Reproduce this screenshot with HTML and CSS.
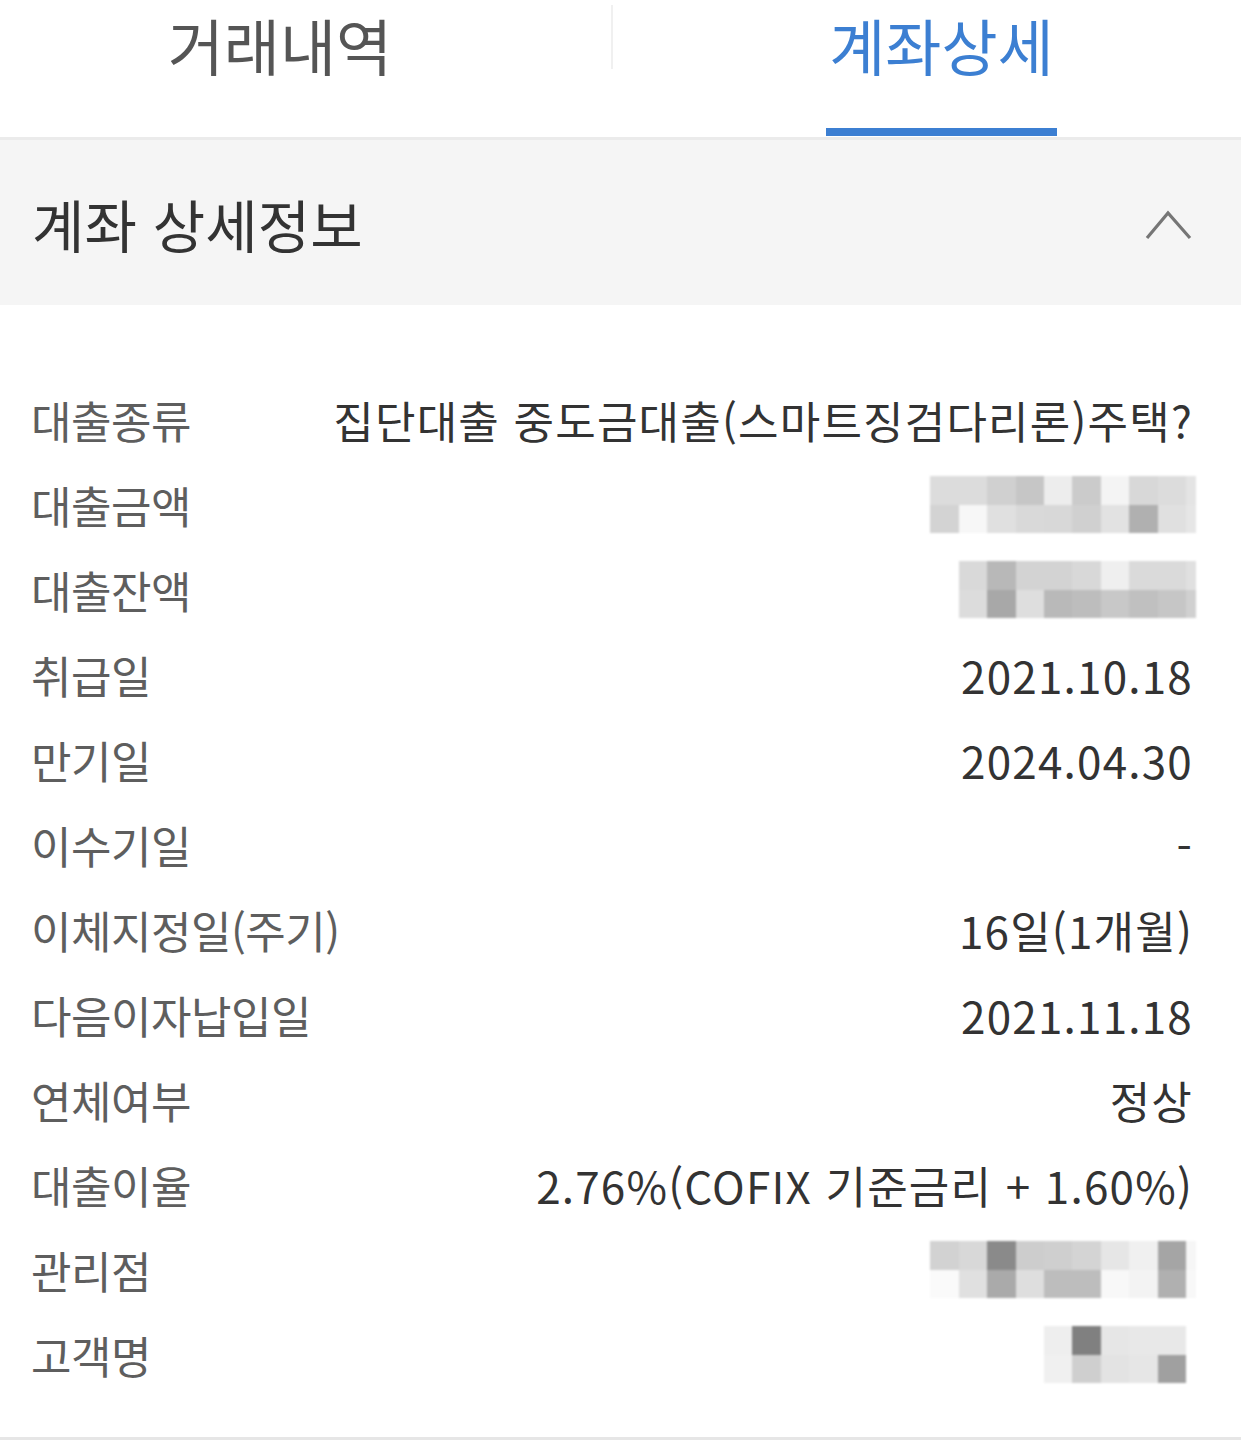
FILE: index.html
```html
<!DOCTYPE html>
<html lang="ko">
<head>
    <meta charset="UTF-8">
    <meta name="viewport" content="width=device-width, initial-scale=1.0">
    <title>계좌상세</title>
    <link rel="stylesheet" href="styles.css">
</head>
<body>

    <!-- Tabs -->
    <div class="tabs">
        <div class="tab"><span>거래내역</span></div>
        <div class="tab-divider"></div>
        <div class="tab active"><span>계좌상세</span></div>
    </div>

    <!-- Section header -->
    <div class="section-header">
        <h2>계좌 상세정보</h2>
        <svg class="chevron" width="48" height="32" viewBox="0 0 48 32">
            <polyline points="2,28 23,3 45,28" fill="none" stroke="#767676" stroke-width="3.2"/>
        </svg>
    </div>

    <!-- Detail rows -->
    <div class="detail-list">
        <div class="row"><span class="label">대출종류</span><span class="value">집단대출 중도금대출(스마트징검다리론)주택?</span></div>
        <div class="row"><span class="label">대출금액</span><span class="value mosaic" id="m-amount"></span></div>
        <div class="row"><span class="label">대출잔액</span><span class="value mosaic" id="m-balance"></span></div>
        <div class="row"><span class="label">취급일</span><span class="value">2021.10.18</span></div>
        <div class="row"><span class="label">만기일</span><span class="value">2024.04.30</span></div>
        <div class="row"><span class="label">이수기일</span><span class="value">-</span></div>
        <div class="row"><span class="label">이체지정일(주기)</span><span class="value">16일(1개월)</span></div>
        <div class="row"><span class="label">다음이자납입일</span><span class="value">2021.11.18</span></div>
        <div class="row"><span class="label">연체여부</span><span class="value">정상</span></div>
        <div class="row"><span class="label">대출이율</span><span class="value">2.76%(COFIX 기준금리 + 1.60%)</span></div>
        <div class="row"><span class="label">관리점</span><span class="value mosaic" id="m-branch"></span></div>
        <div class="row"><span class="label">고객명</span><span class="value mosaic" id="m-name"></span></div>
    </div>

    <script>
        // masked values: two rows of grey cells, the last column is a thin sliver
        const mosaics = {
            'm-amount': [
                ['dcdcdc','dcdcdc','d0d0d0','c6c6c6','ededed','cbcbcb','f4f4f4','d8d8d8','dcdcdc','e4e4e4'],
                ['d3d3d3','f7f7f7','e0e0e0','d9d9d9','d8d8d8','d0d0d0','e2e2e2','b0b0b0','e0e0e0','e6e6e6']
            ],
            'm-balance': [
                ['d9d9d9','b8b8b8','d3d3d3','d3d3d3','d8d8d8','efefef','dadada','dadada','e0e0e0'],
                ['dcdcdc','a8a8a8','dedede','b9b9b9','bdbdbd','c8c8c8','c0c0c0','c6c6c6','d0d0d0']
            ],
            'm-branch': [
                ['d2d2d2','d8d8d8','8a8a8a','cdcdcd','cfcfcf','d4d4d4','e6e6e6','f0f0f0','a5a5a5','f6f6f6'],
                ['fafafa','e0e0e0','aaaaaa','dedede','bdbdbd','bdbdbd','f8f8f8','f3f3f3','b0b0b0','f8f8f8']
            ],
            'm-name': [
                ['eeeeee','808080','e6e6e6','e8e8e8','e8e8e8','ffffff'],
                ['f0f0f0','cfcfcf','e3e3e3','e6e6e6','a0a0a0','ffffff']
            ]
        };

        for (const id in mosaics) {
            const box = document.getElementById(id);
            const rows = mosaics[id];
            box.style.gridTemplateColumns = `repeat(${rows[0].length - 1}, 28.4px) 10px`;
            rows.forEach(row => {
                row.forEach(color => {
                    const cell = document.createElement('i');
                    cell.style.background = '#' + color;
                    box.appendChild(cell);
                });
            });
        }
    </script>
</body>
</html>
```

FILE: styles.css
```css
body {
    font-family: "Noto Sans CJK KR", "Noto Sans", sans-serif;
    background-color: #fff;
    margin: 0;
    padding: 0;
    width: 1241px;
    min-height: 1440px;
    border-bottom: 3px solid #e6e6e6;
    box-sizing: border-box;
}
.tabs {
    display: grid;
    grid-template-columns: 560px 104px 1fr;
    height: 137px;
    border-bottom: 3px solid #ebebeb;
}
.tab {
    display: flex;
    justify-content: center;
    font-size: 61px;
    color: #555;
}
.tab span {
    display: block;
    line-height: 90px;
    padding-top: 0;
    height: 121px;
    box-sizing: border-box;
}
.tab.active {
    padding-right: 22px;
}
.tab.active span {
    color: #3c7fd2;
    border-bottom: 8px solid #3c7fd2;
    padding-left: 3px;
    padding-right: 3px;
    height: 136px;
}
.tab-divider {
    width: 2px;
    height: 64px;
    margin: 5px auto 0;
    background: #f0f0f0;
}
.section-header {
    display: flex;
    align-items: center;
    justify-content: space-between;
    height: 165px;
    padding: 0 48px 0 32px;
    background: #f5f5f5;
}
.section-header h2 {
    margin: 0;
    font-size: 57px;
    font-weight: normal;
    color: #333;
}
.chevron {
    display: block;
    margin-top: 6px;
}
.detail-list {
    padding: 72px 48px 0 31px;
}
.row {
    display: flex;
    align-items: center;
    justify-content: space-between;
    height: 85px;
    font-size: 44px;
}
.label {
    color: #5e5e5e;
    letter-spacing: -0.5px;
}
.value {
    color: #333;
    letter-spacing: 1.2px;
}
.mosaic {
    display: grid;
    grid-template-rows: 28.5px 28.5px;
    filter: blur(0.8px);
    margin-right: -3px;
}
.mosaic i {
    display: block;
}
```
